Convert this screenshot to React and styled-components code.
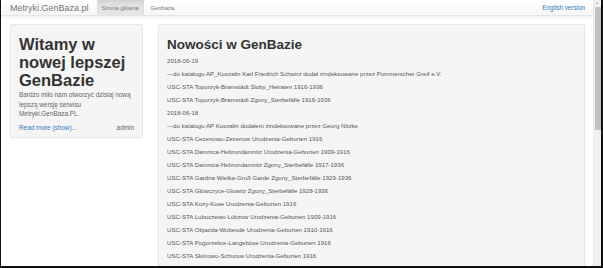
import React from 'react'
import styled, { createGlobalStyle } from 'styled-components'

const GlobalStyle = createGlobalStyle`
    html, body {
        margin: 0;
        padding: 0;
        background: #fff;
        overflow: hidden;
    }
    body {
        font-family: "Liberation Sans", Arial, sans-serif;
        color: #333;
    }
`

const news = [
    '2018-06-19',
    '---do katalogu AP_Koszalin Karl Friedrich Schwirz dodał zindeksowane przez Pommerscher Greif e.V.',
    'USC-STA Toporzyk-Bramstädt Śluby_Heiraten 1916-1936',
    'USC-STA Toporzyk-Bramstädt Zgony_Sterbefälle 1916-1936',
    '2018-06-18',
    '---do katalogu AP Koszalin dodałem zindeksowane przez Georg Nitzke',
    'USC-STA Cecenowo-Zezenow Urodzenia-Geburten 1916',
    'USC-STA Damnica-Hebrondamnitz Urodzenia-Geburten 1909-1916',
    'USC-STA Damnica-Hebrondamnitz Zgony_Sterbefälle 1917-1936',
    'USC-STA Gardna Wielka-Groß Garde Zgony_Sterbefälle 1929-1936',
    'USC-STA Główczyce-Glowitz Zgony_Sterbefälle 1928-1936',
    'USC-STA Kozy-Kose Urodzenia-Geburten 1916',
    'USC-STA Lubuczewo-Lübzow Urodzenia-Geburten 1909-1916',
    'USC-STA Objazda-Wobesde Urodzenia-Geburten 1910-1916',
    'USC-STA Pogorzelice-Langeböse Urodzenia-Geburten 1916',
    'USC-STA Skórowo-Schurow Urodzenia-Geburten 1916',
    'USC-STA Smołdzino-Schmolsin Urodzenia-Geburten 1916',
    'USC-STA Stowięcino-Stojentin Urodzenia-Geburten 1916',
]

const App = () => {
    return (
        <>
            <GlobalStyle />
            <Frame>
                <Page>
                    <Navbar>
                        <Brand>Metryki.GenBaza.pl</Brand>
                        <NavItem active>Strona główna</NavItem>
                        <NavItem>Genbaza</NavItem>
                        <NavRight>English version</NavRight>
                    </Navbar>
                    <Content>
                        <Well>
                            <WellTitle>Witamy w nowej lepszej GenBazie</WellTitle>
                            <WellText>Bardzo miło nam otworzyć dzisiaj nową lepszą wersję serwisu Metryki.GenBaza.PL.</WellText>
                            <WellFooter>
                                <ReadMore>Read more (show)...</ReadMore>
                                <Author>admin</Author>
                            </WellFooter>
                        </Well>
                        <NewsPanel>
                            <NewsTitle>Nowości w GenBazie</NewsTitle>
                            {news.map((line, i) => (
                                <NewsRow key={i}>{line}</NewsRow>
                            ))}
                        </NewsPanel>
                    </Content>
                </Page>
                <ScrollTrack>
                    <ScrollArrow />
                    <ScrollThumb />
                </ScrollTrack>
            </Frame>
        </>
    )
}

const Frame = styled.div`
    display: flex;
    width: 603px;
    height: 268px;
    box-sizing: border-box;
    border-left: 1px solid #111;
    border-right: 2px solid #111;
    border-bottom: 2px solid #111;
    overflow: hidden;
`

const Page = styled.div`
    flex: 1;
    display: flex;
    flex-direction: column;
    min-width: 0;
`

const Navbar = styled.div`
    display: flex;
    align-items: stretch;
    height: 15px;
    flex-shrink: 0;
    padding: 0 8px 0 9px;
    background: linear-gradient(to bottom, #ffffff 0%, #f6f6f6 100%);
    border-bottom: 1px solid #e4e4e4;
    box-shadow: 0 1px 3px rgba(0, 0, 0, 0.08);
`

const Brand = styled.div`
    display: flex;
    align-items: center;
    font-size: 9px;
    color: #777;
    margin-right: 8px;
`

const NavItem = styled.div`
    display: flex;
    align-items: center;
    padding: 0 5px;
    font-size: 5.8px;
    color: #777;
    background: ${p => (p.active ? 'linear-gradient(to bottom, #dedede 0%, #e6e6e6 100%)' : 'transparent')};
    box-shadow: ${p => (p.active ? 'inset 0 2px 3px rgba(0, 0, 0, 0.06)' : 'none')};
    margin-right: ${p => (p.active ? '2px' : '0')};
`

const NavRight = styled.div`
    display: flex;
    align-items: center;
    margin-left: auto;
    font-size: 6.3px;
    color: #337ab7;
`

const Content = styled.div`
    display: flex;
    align-items: flex-start;
    gap: 15px;
    padding: 8px 8px 0 9px;
    flex: 1;
    min-height: 0;
`

const Well = styled.div`
    width: 133px;
    box-sizing: border-box;
    flex-shrink: 0;
    padding: 10px 8px 5px 8px;
    background: #f5f5f5;
    border: 1px solid #e6e6e6;
    border-radius: 2px;
`

const WellTitle = styled.h1`
    margin: 0 0 1px;
    font-size: 16.5px;
    line-height: 18px;
    font-weight: bold;
    color: #333;
`

const WellText = styled.p`
    margin: 0 0 4px;
    font-size: 6.4px;
    line-height: 9.5px;
    color: #666;
`

const WellFooter = styled.div`
    display: flex;
    justify-content: space-between;
    font-size: 6.4px;
    line-height: 9.5px;
`

const ReadMore = styled.span`
    color: #337ab7;
`

const Author = styled.span`
    color: #666;
`

const NewsPanel = styled.div`
    flex: 1;
    align-self: stretch;
    box-sizing: border-box;
    padding: 12px 8px 0 8px;
    background: #f5f5f5;
    border: 1px solid #e6e6e6;
    border-bottom: none;
    border-radius: 2px 2px 0 0;
    overflow: hidden;
`

const NewsTitle = styled.h2`
    margin: 0 0 1px;
    font-size: 13.5px;
    line-height: 16px;
    font-weight: bold;
    color: #333;
`

const NewsRow = styled.div`
    font-size: 6.1px;
    line-height: 13px;
    color: #555;
    white-space: nowrap;
`

const ScrollTrack = styled.div`
    position: relative;
    width: 7px;
    flex-shrink: 0;
    background: #f1f1f1;
    border-left: 1px solid #e8e8e8;
`

const ScrollArrow = styled.div`
    position: absolute;
    top: 2px;
    left: 2px;
    width: 0;
    height: 0;
    border-left: 1.5px solid transparent;
    border-right: 1.5px solid transparent;
    border-bottom: 2px solid #a3a3a3;
`

const ScrollThumb = styled.div`
    position: absolute;
    top: 7px;
    left: 1px;
    right: 0;
    height: 123px;
    background: #c1c1c1;
`

export default App
